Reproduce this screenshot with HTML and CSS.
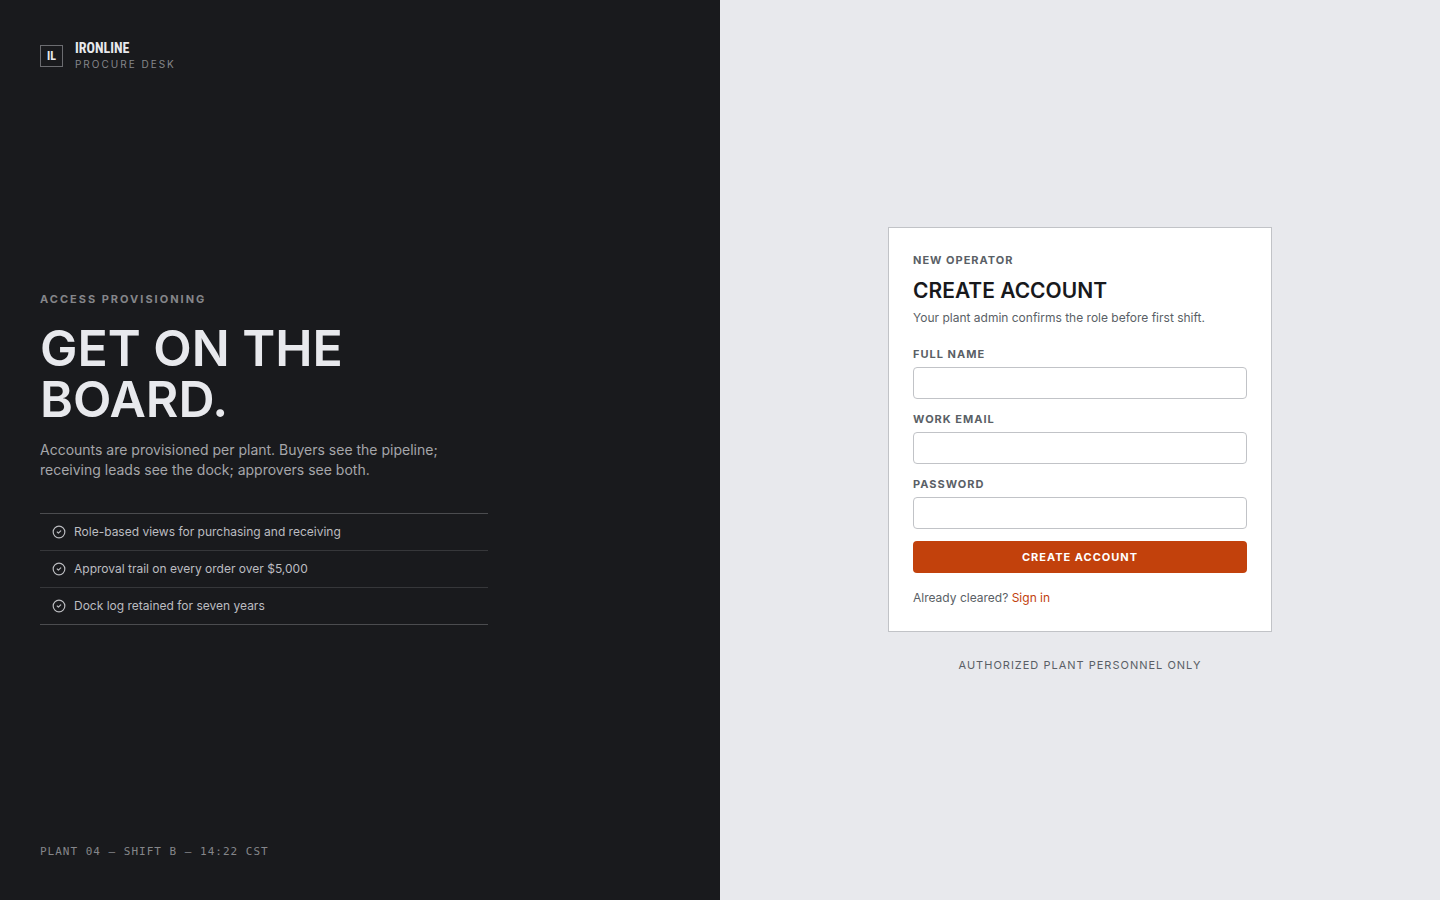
FILE: index.html
```html
<!DOCTYPE html>
<html lang="en">
<head>
    <meta charset="UTF-8">
    <meta name="viewport" content="width=device-width, initial-scale=1">
    <title>Create account - Ironline</title>
    <link rel="stylesheet" href="styles.css">
</head>
<body>
    <div class="page">
        <section class="intro">
            <header class="brand">
                <span class="brand-mark">IL</span>
                <div class="brand-text">
                    <div class="brand-name">IRONLINE</div>
                    <div class="brand-sub">PROCURE DESK</div>
                </div>
            </header>
            <div class="pitch">
                <p class="eyebrow">ACCESS PROVISIONING</p>
                <h1>GET ON THE<br>BOARD.</h1>
                <p class="lead">Accounts are provisioned per plant. Buyers see the pipeline; receiving leads see the dock; approvers see both.</p>
                <ul class="features">
                    <li>
                        <svg class="check" viewBox="0 0 24 24"><circle cx="12" cy="12" r="10"/><path d="M9 12l2 2 4-4"/></svg>
                        Role-based views for purchasing and receiving
                    </li>
                    <li>
                        <svg class="check" viewBox="0 0 24 24"><circle cx="12" cy="12" r="10"/><path d="M9 12l2 2 4-4"/></svg>
                        Approval trail on every order over $5,000
                    </li>
                    <li>
                        <svg class="check" viewBox="0 0 24 24"><circle cx="12" cy="12" r="10"/><path d="M9 12l2 2 4-4"/></svg>
                        Dock log retained for seven years
                    </li>
                </ul>
            </div>
            <footer class="status">PLANT 04 — SHIFT B — 14:22 CST</footer>
        </section>

        <main class="signup">
            <div class="card">
                <p class="eyebrow">NEW OPERATOR</p>
                <h2>CREATE ACCOUNT</h2>
                <p class="hint">Your plant admin confirms the role before first shift.</p>
                <form>
                    <div class="field">
                        <label for="name">FULL NAME</label>
                        <input type="text" id="name" name="name">
                    </div>
                    <div class="field">
                        <label for="email">WORK EMAIL</label>
                        <input type="email" id="email" name="email">
                    </div>
                    <div class="field">
                        <label for="password">PASSWORD</label>
                        <input type="password" id="password" name="password">
                    </div>
                    <button type="submit">CREATE ACCOUNT</button>
                </form>
                <p class="signin">Already cleared? <a href="#">Sign in</a></p>
            </div>
            <p class="notice">AUTHORIZED PLANT PERSONNEL ONLY</p>
        </main>
    </div>
</body>
</html>
```
FILE: styles.css
```css
* {
    box-sizing: border-box;
}
body {
    margin: 0;
    font-family: Inter, sans-serif;
    font-size: 12px;
    line-height: 18px;
    background-color: #e8e9ed;
    color: #18191c;
}
h1, h2, p, ul {
    margin: 0;
    padding: 0;
}
.page {
    display: grid;
    grid-template-columns: 1fr 1fr;
    min-height: 100vh;
}

/* left panel */
.intro {
    display: flex;
    flex-direction: column;
    justify-content: space-between;
    padding: 40px;
    background-color: #191a1d;
    color: #e8e9ed;
}
.brand {
    display: flex;
    align-items: center;
    gap: 12px;
}
.brand-mark {
    padding: 0 6px;
    border: 1px solid #6b6c70;
    font-family: "Liberation Sans Narrow", "Roboto Condensed", Roboto, sans-serif;
    font-size: 12px;
    font-weight: bold;
    line-height: 20px;
}
.brand-name {
    font-family: "Liberation Sans Narrow", "Roboto Condensed", Roboto, sans-serif;
    font-size: 14px;
    font-weight: bold;
    line-height: 16px;
}
.brand-sub {
    font-size: 10px;
    line-height: 16px;
    letter-spacing: 2px;
    color: #85868a;
}
.eyebrow {
    font-size: 11px;
    font-weight: bold;
    line-height: 16px;
    letter-spacing: 1px;
}
.intro .eyebrow {
    letter-spacing: 2px;
    color: #85868a;
}
h1 {
    margin-top: 16px;
    font-size: 50px;
    font-weight: 600;
    line-height: 51px;
}
.lead {
    max-width: 416px;
    margin-top: 15px;
    font-size: 14px;
    line-height: 20px;
    color: #a5a6aa;
}
.features {
    max-width: 448px;
    margin-top: 33px;
    border-top: 1px solid #4b4c4f;
    list-style: none;
    color: #bcbdc1;
}
.features li {
    display: flex;
    align-items: center;
    gap: 8px;
    padding: 9px 12px;
    border-bottom: 1px solid #36373a;
}
.features li:last-child {
    border-bottom-color: #4b4c4f;
}
.check {
    width: 14px;
    height: 14px;
    fill: none;
    stroke: currentColor;
    stroke-width: 2;
    stroke-linecap: round;
    stroke-linejoin: round;
}
.status {
    font-family: "DejaVu Sans Mono", monospace;
    font-size: 11px;
    line-height: 16px;
    letter-spacing: 1px;
    color: #85868a;
}

/* right panel */
.signup {
    display: flex;
    flex-direction: column;
    align-items: center;
    justify-content: center;
    gap: 24px;
    padding: 24px;
}
.card {
    width: 100%;
    max-width: 384px;
    padding: 24px;
    border: 1px solid #c1c3c7;
    background-color: #fff;
    color: #5a5f66;
}
h2 {
    margin-top: 10px;
    font-size: 21px;
    font-weight: 600;
    line-height: 26px;
    color: #18191c;
}
.hint {
    margin-top: 5px;
}
form {
    display: flex;
    flex-direction: column;
    gap: 12px;
    margin-top: 19px;
}
.field {
    display: flex;
    flex-direction: column;
    gap: 5px;
}
label {
    font-size: 11px;
    font-weight: bold;
    line-height: 16px;
    letter-spacing: 1px;
}
input {
    height: 32px;
    padding: 0 10px;
    border: 1px solid #c1c3c7;
    border-radius: 4px;
    background-color: #fff;
    font: inherit;
}
button {
    height: 32px;
    border: none;
    border-radius: 4px;
    background-color: #c2410c;
    color: #fff;
    font-family: inherit;
    font-size: 11px;
    font-weight: bold;
    letter-spacing: 1px;
    cursor: pointer;
}
.signin {
    margin-top: 16px;
}
a {
    color: #c2410c;
    text-decoration: none;
}
.notice {
    font-size: 11px;
    letter-spacing: 1px;
    color: #5a5f66;
}
```
